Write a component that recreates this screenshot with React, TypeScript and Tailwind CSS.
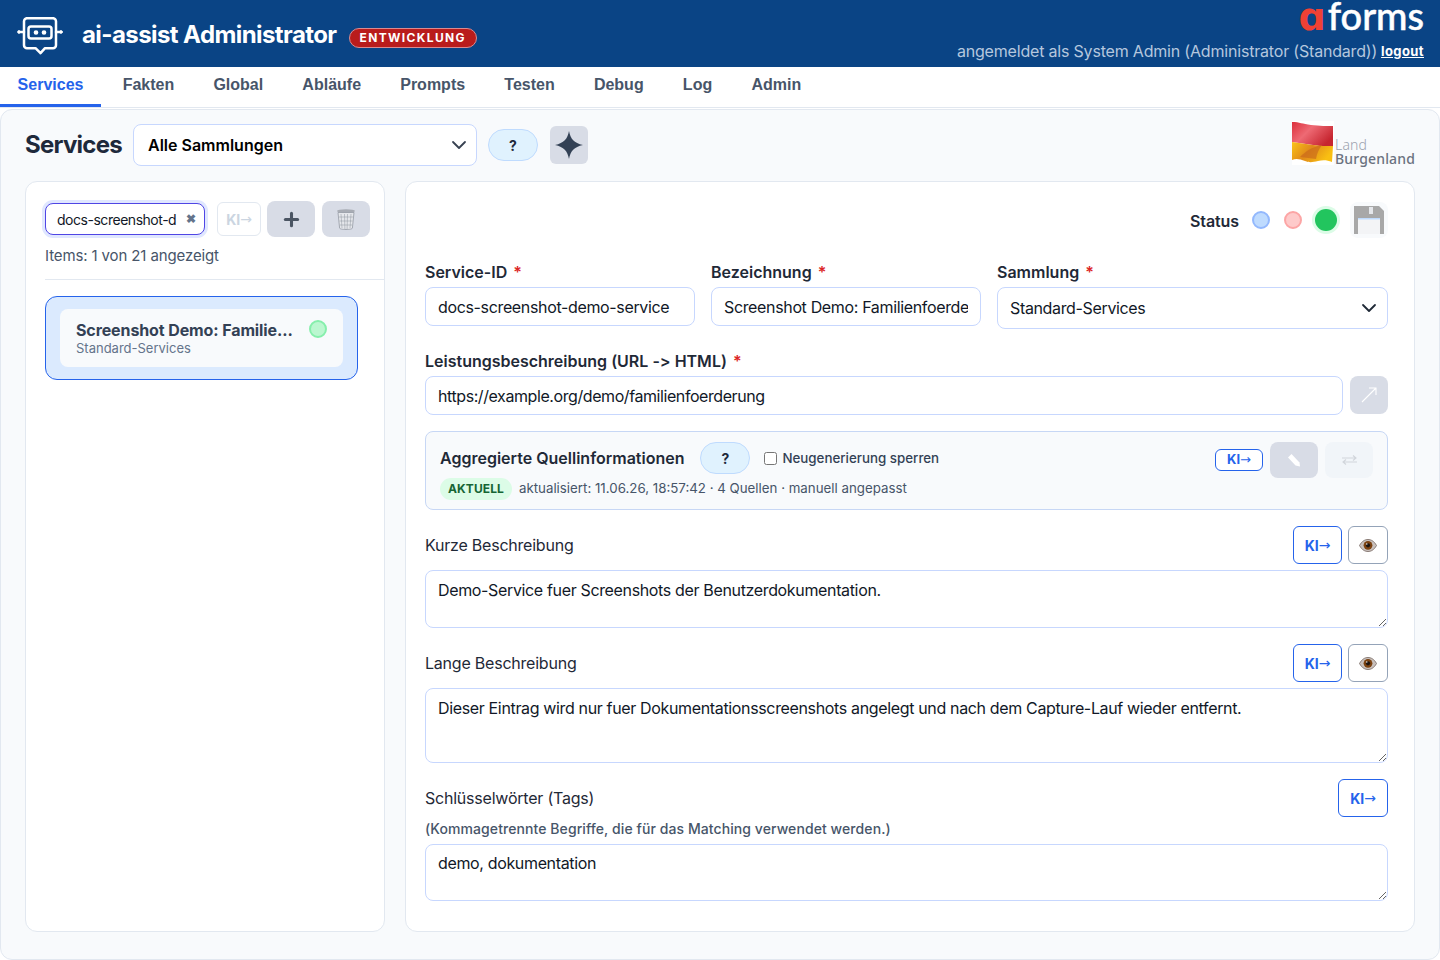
import { ChevronDown, Plus } from "lucide-react";

const tabs = ["Services", "Fakten", "Global", "Abläufe", "Prompts", "Testen", "Debug", "Log", "Admin"];

function BotLogo() {
  return (
    <svg width="46" height="38" viewBox="0 0 46 38" fill="none" stroke="white" strokeWidth="2.500" strokeLinejoin="round" strokeLinecap="round">
      <path d="M10 1.200h26a3 3 0 0 1 3 3v24a3 3 0 0 1-3 3H28l-4.500 5-5-5H10a3 3 0 0 1-3-3v-24a3 3 0 0 1 3-3z" />
      <rect x="11.500" y="9.500" width="23" height="12" rx="2.500" />
      <circle cx="19" cy="15.500" r="1.100" fill="white" />
      <circle cx="27" cy="15.500" r="1.100" fill="white" />
      <circle cx="2" cy="15" r="1.400" fill="white" strokeWidth="0.800" />
      <circle cx="44" cy="15" r="1.400" fill="white" strokeWidth="0.800" />
      <path d="M3 15h4M39 15h4" />
    </svg>
  );
}

function Flag() {
  return (
    <svg width="42" height="44" viewBox="0 0 42 44">
      <defs>
        <linearGradient id="red" x1="0" y1="0" x2="1" y2="0.600">
          <stop offset="0" stopColor="#dc2f3c" />
          <stop offset="0.450" stopColor="#ee6a74" />
          <stop offset="1" stopColor="#c6252f" />
        </linearGradient>
        <linearGradient id="gold" x1="0" y1="0" x2="1" y2="0.400">
          <stop offset="0" stopColor="#fbc417" />
          <stop offset="0.500" stopColor="#e08a1a" />
          <stop offset="1" stopColor="#f9bf12" />
        </linearGradient>
      </defs>
      <rect width="42" height="44" fill="white" />
      <path d="M0 1c8 0 10 2 19 3 9 1 16 1 22 1v20c-8 1-13 0-20-1S7 22 0 21z" fill="url(#red)" />
      <path d="M0 21c7 1 14 2 21 3s12 1 20 1l-1 16c-5-2-9-2-14-1s-8 2-13 0-9-3-13-1z" fill="url(#gold)" />
      <path d="M8 36c6-6 12-10 22-12-3 4-5 8-6 14-5-1-10-1-16-2z" fill="#c9681c" opacity="0.65" />
    </svg>
  );
}

function Trash() {
  return (
    <svg width="20" height="22" viewBox="0 0 20 22">
      <ellipse cx="10" cy="3" rx="9" ry="1.800" fill="#a8acb4" />
      <path d="M2 4.500h16l-1.600 15.500c-.1 1-3 1.500-6.400 1.500s-6.300-.5-6.400-1.500z" fill="#e5e7eb" stroke="#8b919b" strokeWidth="0.700" />
      <path d="M5 6l1 14M8.500 6l.4 15M11.500 6l-.4 15M15 6l-1 14M3 9h14M3.500 13h13M4 17h12" stroke="#8f959f" strokeWidth="0.500" fill="none" />
    </svg>
  );
}

function Floppy() {
  return (
    <svg width="30" height="28" viewBox="0 0 30 28">
      <path d="M0 0h25l5 5v23H0z" fill="#a8a8a8" />
      <rect x="15" y="1" width="4" height="7" fill="#e5e7eb" />
      <rect x="4" y="12" width="22" height="16" fill="#f3f4f6" />
      <rect x="4" y="12" width="22" height="1.500" fill="#bfdbfe" />
    </svg>
  );
}

function Eye() {
  return (
    <svg width="18" height="13" viewBox="0 0 18 13">
      <path d="M0.500 6.500C3 2 6 0.500 9 0.500S15 2 17.500 6.500C15 11 12 12.500 9 12.500S3 11 0.500 6.500z" fill="#c9c1bd" stroke="#75655e" strokeWidth="0.800" />
      <circle cx="9" cy="6.300" r="4.400" fill="#7c4210" />
      <circle cx="9" cy="6.300" r="2.100" fill="#1c1410" />
      <circle cx="7.800" cy="5" r="0.700" fill="white" />
    </svg>
  );
}

function PencilIcon() {
  return (
    <svg width="12" height="13" viewBox="0 0 12 13">
      <path d="M0 3.500L3.500 0l8 8.500.5 4-4.500-1z" fill="white" />
    </svg>
  );
}

function SwapIcon() {
  return (
    <svg width="15" height="10" viewBox="0 0 15 10" fill="none" stroke="#d1d5db" strokeWidth="1.100">
      <path d="M0 3h14M11 0.500L14 3l-3 2.500" />
      <path d="M15 7H1M4 4.500L1 7l3 2.500" />
    </svg>
  );
}

function KiButton({ className }: { className: string }) {
  return (
    <button className={`flex items-center justify-center rounded-md bg-white border border-[#2563eb] text-[#2563eb] font-bold ${className}`}>
      KI<span className="font-['DejaVu_Sans',sans-serif] font-normal">→</span>
    </button>
  );
}

function EyeButton() {
  return (
    <button className="flex h-[38px] w-[40px] items-center justify-center rounded-md border border-[#94a3b8] bg-white">
      <Eye />
    </button>
  );
}

function Label({ children }: { children: string }) {
  return (
    <label className="block h-[24px] text-[16px] leading-[24px] font-semibold text-[#1f2937] [font-feature-settings:'calt'_0]">
      {children} <span className="ml-[2px] text-[#dc2626]">*</span>
    </label>
  );
}

const fieldCls =
  "block w-full rounded-lg border border-[#c7d7fe] bg-white px-3 text-[16px] tracking-[-0.35px] text-[#111827] outline-none";

export default function App() {
  return (
    <div className="h-[960px] overflow-hidden bg-white font-['Inter',sans-serif] text-[#111827]">
      <header className="flex h-[67px] items-start justify-between bg-[#0a4485] pr-[16px] pl-[17px]">
        <div className="flex items-center pt-[15px]">
          <div className="mt-[2px]">
            <BotLogo />
          </div>
          <h1 className="ml-[19px] text-[24px] leading-[40px] font-bold tracking-[-0.58px] text-white">ai-assist Administrator</h1>
          <span className="mt-[6px] ml-[12px] flex h-[20px] items-center rounded-full border border-[#d98a8f] bg-[#b91c1c] px-[10px] text-[12px] font-bold tracking-[1.35px] text-white">
            ENTWICKLUNG
          </span>
        </div>
        <div className="flex flex-col items-end">
          <div className="h-[39px] font-['Lato',sans-serif] text-[38px] leading-[30px] font-medium text-white [-webkit-text-stroke:0.5px_white]">
            <span className="mr-[2px] font-['DejaVu_Sans',sans-serif] text-[38px] font-bold text-[#ef4135] [-webkit-text-stroke:0px]">ɑ</span>forms
          </div>
          <div className="flex items-center gap-[4px] text-[16px] leading-[24px] tracking-[-0.19px] text-[#b5c7de]">
            <span>angemeldet als System Admin (Administrator (Standard))</span>
            <a className="text-[13px] font-bold tracking-[0.4px] text-white underline">logout</a>
          </div>
        </div>
      </header>

      <nav className="flex h-[41px] gap-[4px] border-b border-[#e2e8f0] font-['Liberation_Sans',sans-serif]">
        {tabs.map((t, i) => (
          <a
            key={t}
            className={`flex h-[40px] items-center border-b-[3px] px-[17.6px] pb-[2px] text-[16px] font-bold ${
              i === 0 ? "border-[#2563eb] text-[#2563eb]" : "border-transparent text-[#475569]"
            }`}
          >
            {t}
          </a>
        ))}
      </nav>

      <main className="mt-[1px] h-[851px] rounded-xl border border-[#e2e8f0] bg-[#f8fafc] px-[24px]">
        <div className="flex h-[71px] items-center pb-[1px]">
          <h2 className="w-[108px] text-[24px] font-bold tracking-[-0.75px] text-[#1e293b]">Services</h2>
          <div className="relative w-[344px]">
            <select className="h-[42px] w-full appearance-none rounded-lg border border-[#c7d7fe] bg-white px-[14px] text-[16px] font-semibold text-black outline-none">
              <option>Alle Sammlungen</option>
            </select>
            <ChevronDown className="pointer-events-none absolute top-[9px] right-[6px] text-[#374151]" size={24} strokeWidth={1.800} />
          </div>
          <button className="ml-[11px] h-[32px] w-[50px] rounded-full border border-[#bfdbfe] bg-[#e0f2fe] text-[14px] font-bold text-[#1e293b]">?</button>
          <button className="ml-[12px] flex h-[38px] w-[38px] items-center justify-center rounded-md bg-[#d8dce6]">
            <svg width="28" height="28" viewBox="0 0 28 28">
              <path d="M14 0c1.500 8 5 12 14 14-9 2-12.500 6-14 14-1.500-8-5-12-14-14 9-2 12.500-6 14-14z" fill="#334155" />
            </svg>
          </button>
          <div className="ml-auto flex h-[48px] items-end">
            <div className="mb-[4px]">
              <Flag />
            </div>
            <div className="mb-[3px] ml-[1px] font-['Noto_Sans',sans-serif] text-[14px] tracking-[0.15px] text-[#6b7280]">
              <div className="h-[14px] leading-[14px] font-light text-[#9ca3af]">Land</div>
              <div className="h-[14px] leading-[14px] font-medium">Burgenland</div>
            </div>
          </div>
        </div>

        <div className="flex gap-[20px]">
          <aside className="h-[751px] w-[360px] rounded-xl border border-[#e2e8f0] bg-white">
            <div className="flex items-center pt-[19px] pl-[19px]">
              <div className="flex h-[32px] w-[160px] items-center justify-between rounded-lg border-[1.5px] border-[#4f46e5] bg-white pr-[8px] pl-[11px] shadow-[0_0_0_3px_#e0e7ff]">
                <span className="text-[14px] tracking-[-0.47px] text-[#111827]">docs-screenshot-d</span>
                <span className="text-[12px] font-bold text-[#64748b]">✖</span>
              </div>
              <button className="ml-[12px] flex h-[34px] w-[44px] items-center justify-center rounded-md border border-[#e2e8f0] bg-white text-[14px] font-bold text-[#cbd5e1]">
                KI<span className="font-['DejaVu_Sans',sans-serif] font-normal">→</span>
              </button>
              <button className="ml-[6px] flex h-[36px] w-[48px] items-center justify-center rounded-lg bg-[#d8dce6]">
                <Plus size={21} strokeWidth={3.500} className="text-[#4b5563]" />
              </button>
              <button className="ml-[7px] flex h-[36px] w-[48px] items-center justify-center rounded-lg bg-[#d8dce6]">
                <Trash />
              </button>
            </div>
            <p className="mt-[8px] pl-[19px] text-[15px] leading-[22px] tracking-[-0.12px] text-[#475569]">Items: 1 von 21 angezeigt</p>
            <div className="mt-[12px] ml-[19px] border-t border-[#e2e8f0]" />
            <div className="mt-[16px] ml-[19px] h-[84px] w-[313px] rounded-xl border border-[#2563eb] bg-[#dbeafe] px-[14px] pt-[12px]">
              <div className="flex h-[58px] items-start justify-between rounded-lg bg-[#f8fafc] pt-[11px] pr-[16px] pl-[16px]">
                <div>
                  <div className="text-[16px] leading-[20px] font-bold tracking-[-0.11px] text-[#334155]">Screenshot Demo: Familie...</div>
                  <div className="text-[13px] leading-[16px] text-[#64748b]">Standard-Services</div>
                </div>
                <span className="h-[18px] w-[18px] rounded-full border-2 border-[#86efac] bg-[#bbf7d0]" />
              </div>
            </div>
          </aside>

          <section className="h-[751px] w-[1010px] rounded-xl border border-[#e2e8f0] bg-white pr-[26px] pl-[19px]">
            <div className="flex h-[80px] items-start justify-end pt-[20px]">
              <span className="mt-[7px] text-[16px] font-semibold tracking-[-0.1px] text-[#1f2937]">Status</span>
              <span className="mt-[9px] ml-[13px] h-[18px] w-[18px] rounded-full border-2 border-[#93b8fd] bg-[#bfdbfe]" />
              <span className="mt-[9px] ml-[14px] h-[18px] w-[18px] rounded-full border-2 border-[#fca5a5] bg-[#fecaca]" />
              <span className="mt-[7px] ml-[13px] h-[22px] w-[22px] rounded-full bg-[#22c55e] shadow-[0_0_0_3px_#dcfce7]" />
              <button className="ml-[13px] flex h-[36px] w-[38px] items-center justify-center rounded-lg bg-[#f8fafc]">
                <Floppy />
              </button>
            </div>

            <div className="mt-[-2px] flex gap-[16px]">
              <div className="w-[270px]">
                <Label>Service-ID</Label>
                <input className={`${fieldCls} mt-[3px] h-[39px]`} defaultValue="docs-screenshot-demo-service" />
              </div>
              <div className="w-[270px]">
                <Label>Bezeichnung</Label>
                <input className={`${fieldCls} mt-[3px] h-[39px]`} defaultValue="Screenshot Demo: Familienfoerderung" />
              </div>
              <div className="flex-1">
                <Label>Sammlung</Label>
                <div className="relative mt-[3px]">
                  <select className={`${fieldCls} h-[42px] appearance-none`}>
                    <option>Standard-Services</option>
                  </select>
                  <ChevronDown className="pointer-events-none absolute top-[9px] right-[7px] text-[#1f2937]" size={24} strokeWidth={1.800} />
                </div>
              </div>
            </div>

            <div className="mt-[20px]">
              <Label>Leistungsbeschreibung (URL -&gt; HTML)</Label>
              <div className="mt-[3px] flex gap-[7px]">
                <input className={`${fieldCls} h-[39px] flex-1 tracking-[-0.42px]`} defaultValue="https://example.org/demo/familienfoerderung" />
                <button className="flex h-[38px] w-[38px] items-center justify-center rounded-lg bg-[#d8dce6]">
                  <svg width="18" height="18" viewBox="0 0 18 18" fill="none" stroke="white" strokeWidth="1.100">
                    <path d="M2 16L16 2M9 2h7v7" />
                  </svg>
                </button>
              </div>
            </div>

            <div className="mt-[16px] flex h-[79px] justify-between rounded-lg border border-[#c7d7f5] bg-[#f8fafc] px-[14px] pt-[10px]">
              <div>
                <div className="flex h-[32px] items-center">
                  <span className="text-[16px] font-semibold text-[#1f2937]">Aggregierte Quellinformationen</span>
                  <button className="ml-[16px] h-[32px] w-[50px] rounded-full border border-[#bfdbfe] bg-[#e0f2fe] text-[14px] font-bold text-[#1e293b]">?</button>
                  <label className="ml-[14px] flex items-center gap-[5px] pt-[1px] text-[13.33px] font-medium text-[#334155]">
                    <input type="checkbox" className="h-[13px] w-[13px]" />
                    Neugenerierung sperren
                  </label>
                </div>
                <div className="mt-[4px] flex items-center">
                  <span className="flex h-[22px] items-center rounded-full bg-[#dcfce7] px-[8px] text-[12px] font-bold tracking-[0.1px] text-[#166534]">AKTUELL</span>
                  <span className="ml-[7px] text-[13.3px] text-[#475569]">aktualisiert: 11.06.26, 18:57:42 · 4 Quellen · manuell angepasst</span>
                </div>
              </div>
              <div className="flex gap-[7px]">
                <KiButton className="mt-[7px] h-[22px] w-[48px] text-[13px]" />
                <button className="flex h-[36px] w-[48px] items-center justify-center rounded-lg bg-[#d8dce6]">
                  <PencilIcon />
                </button>
                <button className="flex h-[36px] w-[48px] items-center justify-center rounded-lg bg-[#f1f5f9]">
                  <SwapIcon />
                </button>
              </div>
            </div>

            <div className="mt-[16px] flex h-[38px] items-center justify-between">
              <span className="text-[16px] tracking-[-0.22px] text-[#1f2937]">Kurze Beschreibung</span>
              <div className="flex gap-[6px]">
                <KiButton className="h-[38px] w-[49px] text-[14px]" />
                <EyeButton />
              </div>
            </div>
            <textarea className={`${fieldCls} mt-[6px] h-[58px] py-[7px]`} defaultValue="Demo-Service fuer Screenshots der Benutzerdokumentation." />

            <div className="mt-[16px] flex h-[38px] items-center justify-between">
              <span className="text-[16px] tracking-[-0.22px] text-[#1f2937]">Lange Beschreibung</span>
              <div className="flex gap-[6px]">
                <KiButton className="h-[38px] w-[49px] text-[14px]" />
                <EyeButton />
              </div>
            </div>
            <textarea className={`${fieldCls} mt-[6px] h-[75px] py-[7px]`} defaultValue="Dieser Eintrag wird nur fuer Dokumentationsscreenshots angelegt und nach dem Capture-Lauf wieder entfernt." />

            <div className="mt-[16px] flex h-[38px] items-center justify-between">
              <span className="text-[16px] tracking-[-0.22px] text-[#1f2937]">Schlüsselwörter (Tags)</span>
              <KiButton className="h-[38px] w-[50px] text-[14px]" />
            </div>
            <p className="mt-[2px] h-[25px] text-[14px] leading-[20px] font-medium tracking-[0.08px] text-[#475569]">(Kommagetrennte Begriffe, die für das Matching verwendet werden.)</p>
            <textarea className={`${fieldCls} h-[57px] py-[6px]`} defaultValue="demo, dokumentation" />
          </section>
        </div>
      </main>
    </div>
  );
}
